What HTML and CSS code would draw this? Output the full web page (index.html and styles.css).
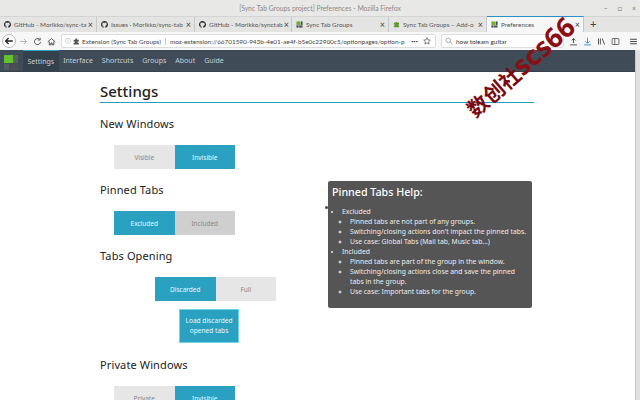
FILE: index.html
```html
<!DOCTYPE html>
<html lang="en">

<head>
  <meta charset="UTF-8" />
  <title>[Sync Tab Groups project] Preferences - Mozilla Firefox</title>
  <link rel="stylesheet" href="styles.css">
</head>

<body>
  <svg class="svg-defs" width="0" height="0">
    <symbol id="gh" viewBox="0 0 16 16">
      <path fill="#24292e" d="M8 0C3.6 0 0 3.6 0 8c0 3.5 2.3 6.5 5.5 7.6.4.1.5-.2.5-.4v-1.4c-2.2.5-2.7-1-2.7-1-.4-.9-.9-1.2-.9-1.2-.7-.5.1-.5.1-.5.8.1 1.2.8 1.2.8.7 1.2 1.9.9 2.3.7.1-.5.3-.9.5-1.1-1.8-.2-3.6-.9-3.6-4 0-.9.3-1.6.8-2.1-.1-.2-.4-1 .1-2.1 0 0 .7-.2 2.2.8.6-.2 1.3-.3 2-.3s1.4.1 2 .3c1.5-1 2.2-.8 2.2-.8.4 1.1.2 1.9.1 2.1.5.6.8 1.3.8 2.1 0 3.1-1.9 3.7-3.7 3.9.3.3.6.8.6 1.5v2.2c0 .2.1.5.6.4C13.7 14.500 16 11.5 16 8c0-4.400-3.6-8-8-8z" />
    </symbol>
    <symbol id="stg" viewBox="0 0 16 16">
      <rect x="1" y="1" width="9" height="8" fill="#6fae2c" />
      <rect x="11" y="1" width="4" height="8" fill="#3d4a55" />
      <rect x="1" y="10" width="5" height="5" fill="#3d4a55" />
      <rect x="7" y="10" width="8" height="5" fill="#555" />
    </symbol>
  </svg>

  <div class="window">
    <div class="titlebar">
      <span class="title-text">[Sync Tab Groups project] Preferences - Mozilla Firefox</span>
      <div class="win-btns"><span>&#8211;</span><span>&#9633;</span><span>&#215;</span></div>
    </div>

    <div class="tabstrip">
      <div class="tab w-gh"><svg class="fav"><use href="#gh" /></svg><span class="tab-label">GitHub - Morikko/sync-ta</span><span class="tab-x">&#215;</span></div>
      <div class="tab w-gh2"><svg class="fav"><use href="#gh" /></svg><span class="tab-label">Issues · Morikko/sync-tab</span><span class="tab-x">&#215;</span></div>
      <div class="tab w-gh3"><svg class="fav"><use href="#gh" /></svg><span class="tab-label">GitHub - Morikko/synctab</span><span class="tab-x">&#215;</span></div>
      <div class="tab w-stg"><svg class="fav"><use href="#stg" /></svg><span class="tab-label">Sync Tab Groups</span><span class="tab-x">&#215;</span></div>
      <div class="tab w-addon">
        <svg class="fav" viewBox="0 0 16 16"><path fill="#5c9a2c" d="M6 2h4v2h4v4h-2v2h2v4H2v-4h2V8H2V4h4z" /></svg>
        <span class="tab-label">Sync Tab Groups – Add-o</span><span class="tab-x">&#215;</span>
      </div>
      <div class="tab tab-active"><svg class="fav"><use href="#stg" /></svg><span class="tab-label">Preferences</span><span class="tab-x">&#215;</span></div>
      <span class="tab-new">+</span>
    </div>

    <div class="toolbar">
      <span class="back-btn">
        <svg viewBox="0 0 12 12" width="10" height="10"><path d="M10.500 6H2M5.500 2.500L2 6l3.500 3.500" fill="none" stroke="#222" stroke-width="1.600" /></svg>
      </span>
      <svg class="tool-ico" viewBox="0 0 12 12"><path d="M1.500 6H10M6.500 2.500L10 6l-3.500 3.500" fill="none" stroke="#aaa" stroke-width="1.200" /></svg>
      <svg class="tool-ico" viewBox="0 0 12 12"><path d="M10 6.500A4 4 0 1 1 8.500 3M9.500 1v3h-3" fill="none" stroke="#444" stroke-width="1.200" /></svg>
      <svg class="tool-ico" viewBox="0 0 12 12"><path d="M1 6.500L6 2l5 4.500M3 6v4.500h2.200V8h1.600v2.500H9V6" fill="none" stroke="#444" stroke-width="1.200" /></svg>
      <div class="urlbar">
        <span class="url-info">&#9432;</span>
        <svg class="url-ext" viewBox="0 0 12 12"><path fill="#555" d="M4 1h3v2h3v3H8v2h2v3H1V8h2V6H1V3h3z" /></svg>
        <span class="url-ident">Extension (Sync Tab Groups)</span>
        <span class="url-text">moz-extension://66701590-943b-4e01-ae4f-b5e0c22900c5/optionpages/option-p</span>
        <span class="url-dots">&#8226;&#8226;&#8226;</span>
        <svg class="url-star" viewBox="0 0 12 12"><path d="M6 1l1.500 3.300 3.500.4-2.600 2.400.7 3.500L6 8.900l-3.100 1.700.7-3.500L1 4.700l3.500-.4z" fill="none" stroke="#444" /></svg>
      </div>
      <div class="searchbar">
        <svg class="search-ico" viewBox="0 0 12 12"><circle cx="5" cy="5" r="3.500" fill="none" stroke="#888" /><path d="M7.500 7.500L11 11" stroke="#888" /></svg>
        <span>how toleam guitar</span>
      </div>
      <div class="tool-right">
        <svg class="tool-ico" viewBox="0 0 12 12"><path d="M6 8V2M3.500 4.500L6 2l2.500 2.500M1.500 10.500h9" fill="none" stroke="#444" stroke-width="1.200" /></svg>
        <svg class="tool-ico" viewBox="0 0 12 12"><path d="M6 1v7M3 5.500L6 8.500l3-3M1.500 10.500h9" fill="none" stroke="#2a8fe0" stroke-width="1.200" /></svg>
        <svg class="tool-ico" viewBox="0 0 12 12"><path d="M2 2v8M4.500 2v8M7 2l3 8" fill="none" stroke="#444" stroke-width="1.200" /></svg>
        <svg class="tool-ico" viewBox="0 0 12 12"><rect x="1.500" y="2" width="9" height="8" rx="1" fill="none" stroke="#444" /><path d="M5 2v8" stroke="#444" /></svg>
        <svg class="tool-ico menu-ico" viewBox="0 0 12 12"><path d="M1.500 3h9M1.500 6h9M1.500 9h9" stroke="#333" stroke-width="1.200" /></svg>
      </div>
    </div>

    <div class="page">
      <div class="page-main">
        <nav class="navbar">
          <svg class="nav-logo" viewBox="0 0 14 15">
            <rect x="0" y="0" width="9" height="8" fill="#62c22c" />
            <rect x="9" y="0" width="5" height="8" fill="#55625f" />
            <rect x="0" y="9" width="5" height="6" fill="#515c62" />
            <rect x="6" y="9" width="8" height="6" fill="#4c4f52" />
          </svg>
          <a class="nav-item nav-active">Settings</a>
          <a class="nav-item">Interface</a>
          <a class="nav-item">Shortcuts</a>
          <a class="nav-item">Groups</a>
          <a class="nav-item">About</a>
          <a class="nav-item">Guide</a>
        </nav>

        <main class="content">
          <h1 class="page-title">Settings</h1>

          <h2 class="section-title">New Windows</h2>
          <div class="toggle">
            <button class="btn">Visible</button>
            <button class="btn btn-on">Invisible</button>
          </div>

          <h2 class="section-title">Pinned Tabs</h2>
          <div class="toggle">
            <button class="btn btn-on">Excluded</button>
            <button class="btn btn-dim">Included</button>
          </div>

          <h2 class="section-title">Tabs Opening</h2>
          <div class="toggle toggle-center">
            <button class="btn btn-on">Discarded</button>
            <button class="btn">Full</button>
          </div>
          <button class="load-btn">Load discarded<br>opened tabs</button>

          <h2 class="section-title">Private Windows</h2>
          <div class="toggle">
            <button class="btn">Private</button>
            <button class="btn btn-on">Invisible</button>
          </div>
        </main>
      </div>
      <div class="scrollbar"></div>

      <aside class="help">
        <h3 class="help-title">Pinned Tabs Help:</h3>
        <ul class="help-list">
          <li>Excluded
            <ul>
              <li>Pinned tabs are not part of any groups.</li>
              <li>Switching/closing actions don't impact the pinned tabs.</li>
              <li>Use case: Global Tabs (Mail tab, Music tab...)</li>
            </ul>
          </li>
          <li>Included
            <ul>
              <li>Pinned tabs are part of the group in the window.</li>
              <li>Switching/closing actions close and save the pinned tabs in the group.</li>
              <li>Use case: Important tabs for the group.</li>
            </ul>
          </li>
        </ul>
      </aside>
    </div>

    <div class="watermark">数创社<span class="watermark-latin">scs66</span></div>
  </div>
</body>

</html>
```

FILE: styles.css
```css
* {
  box-sizing: border-box;
  margin: 0;
  padding: 0;
}

body {
  width: 640px;
  height: 400px;
  overflow: hidden;
  font-family: "Noto Sans", sans-serif;
  background-color: #fff;
}

.svg-defs {
  position: absolute;
}

.window {
  display: flex;
  flex-direction: column;
  position: relative;
  width: 640px;
  height: 400px;
  overflow: hidden;
}

/* title bar */
.titlebar {
  display: flex;
  justify-content: center;
  align-items: center;
  height: 16px;
  flex: none;
  position: relative;
  background-color: #e8e8e7;
  font-family: Lato, sans-serif;
  font-size: 6.750px;
  color: #8a8a8a;
}

.win-btns {
  position: absolute;
  right: 0;
  top: 0;
  height: 16px;
  display: flex;
  align-items: center;
  gap: 10px;
  padding-right: 4px;
  color: #777;
  font-size: 7px;
}

/* tabs */
.tabstrip {
  display: flex;
  align-items: stretch;
  height: 16px;
  flex: none;
  background-color: #e4e4e3;
  border-top: 1px solid #d4d4d4;
  font-family: Lato, sans-serif;
  font-size: 6.400px;
  color: #555;
}

.tab {
  display: flex;
  align-items: center;
  padding: 0 3px 0 4px;
  border-right: 1px solid #c8c8c8;
  overflow: hidden;
}

.w-gh {
  width: 97px;
}

.w-gh2 {
  width: 98px;
}

.w-gh3 {
  width: 97px;
}

.w-stg {
  width: 97px;
}

.w-addon {
  width: 98px;
}

.tab-active {
  width: 97px;
  background-color: #f7f7f7;
  border-top: 1px solid #2a90c8;
  border-right: 1px solid #c8c8c8;
  margin-top: -1px;
}

.fav {
  width: 7px;
  height: 7px;
  flex: none;
  margin-right: 3px;
}

.tab-label {
  flex: 1;
  white-space: nowrap;
}

.tab-x {
  flex: none;
  font-size: 9px;
  color: #444;
  padding-left: 1px;
}

.tab-new {
  margin-left: 6px;
  font-size: 11px;
  line-height: 14px;
  color: #444;
}

/* toolbar */
.toolbar {
  display: flex;
  align-items: center;
  height: 18px;
  flex: none;
  padding-left: 2px;
  background-color: #f7f7f7;
  font-family: Lato, sans-serif;
  font-size: 6.400px;
  color: #555;
}

.back-btn {
  display: flex;
  justify-content: center;
  align-items: center;
  width: 14px;
  height: 14px;
  border: 1px solid #bbb;
  border-radius: 50%;
  background-color: #fff;
}

.tool-ico {
  width: 9px;
  height: 9px;
  flex: none;
  margin: 0 2.500px;
}

.urlbar {
  display: flex;
  align-items: center;
  width: 375px;
  height: 14px;
  margin-left: 3px;
  padding: 0 4px 0 3px;
  background-color: #fff;
  border: 1px solid #ddd;
  border-radius: 2px;
  white-space: nowrap;
  overflow: hidden;
}

.url-info {
  margin-right: 2px;
  color: #888;
}

.url-ext {
  width: 7px;
  height: 7px;
  flex: none;
  margin-right: 2px;
}

.url-ident {
  padding-right: 4px;
  border-right: 1px solid #ccc;
  color: #444;
}

.url-text {
  flex: 1;
  overflow: hidden;
  margin-left: 4px;
  color: #444;
}

.url-dots {
  margin: 0 5px;
  font-size: 4px;
  color: #333;
}

.url-star {
  width: 8px;
  height: 8px;
  flex: none;
}

.searchbar {
  display: flex;
  align-items: center;
  width: 123px;
  height: 14px;
  margin-left: 5px;
  padding: 0 3px;
  background-color: #fff;
  border: 1px solid #ddd;
  border-radius: 2px;
  color: #333;
}

.search-ico {
  width: 8px;
  height: 8px;
  flex: none;
  margin-right: 3px;
}

.tool-right {
  display: flex;
  align-items: center;
  margin-left: 2px;
}

.menu-ico {
  margin-left: 6.500px;
}

/* page */
.page {
  flex: 1;
  display: flex;
  position: relative;
  overflow: hidden;
}

.page-main {
  flex: 1;
}

.scrollbar {
  width: 5px;
  background-color: #e0e0e0;
  border-left: 1px solid #c8c8c8;
}

.navbar {
  display: flex;
  align-items: stretch;
  height: 22px;
  background-color: #3f4b56;
  border-bottom: 1px solid #37424c;
}

.nav-logo {
  width: 14px;
  height: 15px;
  margin: 5px 5px 0 4px;
}

.nav-item {
  display: flex;
  align-items: center;
  padding: 0 4.500px;
  font-size: 7px;
  color: #c9d0d6;
}

.nav-active {
  background-color: #33414c;
  border-top: 1px solid #2ea3c2;
}

.content {
  width: 434px;
  margin-left: 100px;
}

.page-title {
  padding-top: 9px;
  height: 31px;
  border-bottom: 1px solid #2a9dbf;
  font-size: 15px;
  line-height: 20px;
  font-weight: 500;
  color: #222;
}

.section-title {
  margin-top: 13px;
  font-size: 11px;
  line-height: 16px;
  font-weight: 400;
  letter-spacing: 0.120px;
  color: #222;
}

.toggle {
  display: flex;
  margin: 13px 0 13px 14px;
}

.toggle-center {
  margin-left: 55px;
  margin-bottom: 8px;
}

.btn {
  width: 60.500px;
  height: 24px;
  border: none;
  background-color: #e6e6e6;
  font-family: inherit;
  font-size: 6.500px;
  color: #888;
}

.btn-on {
  background-color: #2aa1c0;
  color: #e8f6fa;
}

.btn-dim {
  background-color: #cfcfcf;
}

.load-btn {
  display: block;
  width: 60px;
  height: 34px;
  margin: 0 0 14px 79px;
  border: 1px solid #6fd3ea;
  background-color: #2aa1c0;
  font-family: inherit;
  font-size: 6.600px;
  line-height: 10px;
  color: #e8f6fa;
}

/* help popup */
.help {
  position: absolute;
  left: 328px;
  top: 131px;
  width: 204px;
  height: 127px;
  padding: 3px 4px 0 4px;
  background-color: #555;
  border-radius: 2px;
  color: #eee;
  font-size: 6.800px;
  line-height: 10px;
}

.help::before {
  content: "";
  position: absolute;
  left: -3px;
  top: 25px;
  width: 3px;
  height: 3px;
  border-radius: 50%;
  background-color: #444;
}

.help-title {
  margin-bottom: 7px;
  font-size: 10.700px;
  line-height: 16px;
  font-weight: 500;
  color: #fff;
}

.help-list {
  padding-left: 10px;
}

.help-list ul {
  padding-left: 8px;
  list-style-type: circle;
}

.watermark {
  position: absolute;
  left: 520px;
  top: 67px;
  transform: translate(-50%, -50%) rotate(-41deg);
  font-family: "Noto Sans CJK SC", "Noto Sans", sans-serif;
  font-size: 21px;
  line-height: 28px;
  font-weight: 700;
  white-space: nowrap;
  color: #7a0a12;
}

.watermark-latin {
  font-family: "Noto Sans", sans-serif;
  font-size: 27px;
  font-weight: 700;
  color: #8a0f14;
}
```
